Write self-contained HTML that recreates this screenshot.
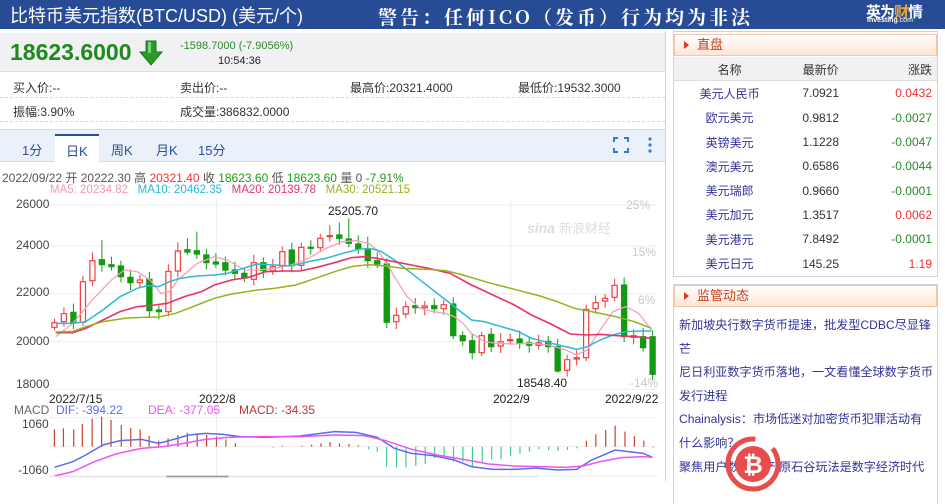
<!DOCTYPE html>
<html><head><meta charset="utf-8">
<style>
*{margin:0;padding:0;box-sizing:border-box}
body{width:945px;height:504px;overflow:hidden;background:#fff;font-family:"Liberation Sans","Noto Sans CJK SC",sans-serif;position:relative;color:#333}
.a{position:absolute;white-space:nowrap}
#hdr{left:0;top:0;width:945px;height:29px;background:#274b95}
#main{left:0;top:31px;width:666px;height:450px;border-right:1px solid #cfd3db}
.dash{border-bottom:1px dashed #d8d8d8}
.r{color:#e33}.g{color:#2a8a2a}
.rowt{font-size:12px;color:#333}
.ph{background:linear-gradient(#fff,#fde6d6);border:1px solid #f3c6a5;color:#c5431c;font-size:13px;padding-left:22px;line-height:20px}
.ph:before{content:"";position:absolute;left:9px;top:6px;border-left:5px solid #d4401a;border-top:4px solid transparent;border-bottom:4px solid transparent}
table{border-collapse:collapse;font-size:12px}
td{height:24.3px}
.nm{color:#333399;text-align:center;width:110px}
.pr{text-align:center;width:70px;color:#333}
.ch{text-align:right;width:80px;padding-right:5px}
.news{font-size:12.1px;color:#333399;line-height:23.6px;white-space:nowrap}
</style></head><body>
<div class="a" id="hdr"></div>
<div class="a" style="left:10px;top:2px;font-size:18px;color:#fff">比特币美元指数(BTC/USD) (美元/个)</div>
<div class="a" style="left:378px;top:3px;font-size:19px;color:#fff;font-family:'Noto Serif CJK SC',serif;letter-spacing:3px;font-weight:bold">警告：任何ICO（发币）行为均为非法</div>
<div class="a" style="left:866px;top:1px;font-size:15px;font-weight:bold;color:#fff;letter-spacing:-1px">英为<span style="color:#f5a623">财</span>情</div>
<div class="a" style="left:867px;top:17px;font-size:7px;font-weight:bold;color:#fff">Investing<span style="font-weight:normal">.com</span></div>

<div class="a" id="main"></div>
<div class="a" style="left:0;top:33px;width:665px;height:39px;background:#f1f1f3;border-bottom:1px solid #ddd"></div>
<div class="a" style="left:10px;top:39px;font-size:23px;font-weight:bold;color:#1e8a1e">18623.6000</div>
<svg class="a" style="left:138px;top:40px" width="26" height="26" viewBox="0 0 26 26"><path d="M8 1h10v11h6L13 25 2 12h6z" fill="#2a9a2a" stroke="#1a7a1a"/><path d="M10 2h3v11h-3z" fill="#7ccf7c"/></svg>
<div class="a g" style="left:180px;top:40px;font-size:11px">-1598.7000 (-7.9056%)</div>
<div class="a" style="left:218px;top:55px;font-size:11px;color:#222">10:54:36</div>
<div class="a dash" style="left:0;top:74px;width:665px;height:24px"></div>
<div class="a dash" style="left:0;top:98px;width:665px;height:24px"></div>
<div class="a rowt" style="left:13px;top:79px">买入价:--</div>
<div class="a rowt" style="left:180px;top:79px">卖出价:--</div>
<div class="a rowt" style="left:350px;top:79px">最高价:20321.4000</div>
<div class="a rowt" style="left:518px;top:79px">最低价:19532.3000</div>
<div class="a rowt" style="left:13px;top:103px">振幅:3.90%</div>
<div class="a rowt" style="left:180px;top:103px">成交量:386832.0000</div>

<div class="a" style="left:0;top:129px;width:665px;height:33px;background:#eaf1fb;border-top:1px solid #d3dcea;border-bottom:1px solid #d3dcea"></div>
<div class="a" style="left:55px;top:134px;width:44px;height:29px;background:#fff;border-top:2px solid #2b4e93"></div>
<div class="a" style="left:22px;top:140px;font-size:13px;color:#2b4e93">1分</div>
<div class="a" style="left:66px;top:141px;font-size:13px;color:#2b4e93">日K</div>
<div class="a" style="left:111px;top:140px;font-size:13px;color:#2b4e93">周K</div>
<div class="a" style="left:156px;top:140px;font-size:13px;color:#2b4e93">月K</div>
<div class="a" style="left:198px;top:140px;font-size:13px;color:#2b4e93">15分</div>
<svg class="a" style="left:613px;top:137px" width="16" height="16"><path d="M1 5V1h4M11 1h4v4M15 11v4h-4M5 15H1v-4" fill="none" stroke="#3a78d8" stroke-width="2"/></svg>
<svg class="a" style="left:647px;top:136px" width="6" height="18"><circle cx="3" cy="3" r="1.6" fill="#3a78d8"/><circle cx="3" cy="9" r="1.6" fill="#3a78d8"/><circle cx="3" cy="15" r="1.6" fill="#3a78d8"/></svg>

<div class="a" style="left:2px;top:169px;font-size:12px;color:#555">2022/09/22 开 20222.30 高 <span class="r">20321.40</span> 收 <span style="color:#1e9a1e">18623.60</span> 低 <span style="color:#1e9a1e">18623.60</span> 量 0 <span style="color:#1e9a1e">-7.91%</span></div>
<div class="a" style="left:50px;top:184px;font-size:11.5px"><span style="color:#f29ab8">MA5: 20234.82</span>&nbsp;&nbsp; <span style="color:#2ab6da">MA10: 20462.35</span>&nbsp;&nbsp; <span style="color:#e8336b">MA20: 20139.78</span>&nbsp;&nbsp; <span style="color:#96b21c">MA30: 20521.15</span></div>

<svg class="a" id="ch" style="left:0;top:190px" width="670" height="314" viewBox="0 0 1563 942" preserveAspectRatio="none"></svg>
<div class="a" style="left:16px;top:197px;font-size:12px;color:#444">26000</div>
<div class="a" style="left:16px;top:238px;font-size:12px;color:#444">24000</div>
<div class="a" style="left:16px;top:285px;font-size:12px;color:#444">22000</div>
<div class="a" style="left:16px;top:334px;font-size:12px;color:#444">20000</div>
<div class="a" style="left:16px;top:377px;font-size:12px;color:#444">18000</div>
<div class="a" style="left:626px;top:198px;font-size:12px;color:#c8c8c8">25%</div>
<div class="a" style="left:632px;top:245px;font-size:12px;color:#c8c8c8">15%</div>
<div class="a" style="left:638px;top:293px;font-size:12px;color:#c8c8c8">6%</div>
<div class="a" style="left:630px;top:376px;font-size:12px;color:#c8c8c8">-14%</div>
<div class="a" style="left:328px;top:204px;font-size:12px;color:#222">25205.70</div>
<div class="a" style="left:517px;top:376px;font-size:12px;color:#222">18548.40</div>
<div class="a" style="left:527px;top:218px;font-size:14px;color:#ddd;font-style:italic;font-weight:bold">sina <span style="font-weight:normal;font-style:normal;font-size:13px">新浪财经</span></div>
<div class="a" style="left:49px;top:392px;font-size:12px;color:#222">2022/7/15</div>
<div class="a" style="left:199px;top:392px;font-size:12px;color:#222">2022/8</div>
<div class="a" style="left:493px;top:392px;font-size:12px;color:#222">2022/9</div>
<div class="a" style="left:605px;top:392px;font-size:12px;color:#222">2022/9/22</div>
<div class="a" style="left:14px;top:403px;font-size:12px;color:#666">MACD &nbsp;<span style="color:#5a6cf0">DIF: -394.22</span></div>
<div class="a" style="left:148px;top:403px;font-size:12px;color:#ee55ee">DEA: -377.05</div>
<div class="a" style="left:239px;top:403px;font-size:12px;color:#b83a3a">MACD: -34.35</div>
<div class="a" style="left:22px;top:417px;font-size:12px;color:#444">1060</div>
<div class="a" style="left:18px;top:463px;font-size:12px;color:#444">-1060</div>

<!-- right panel -->
<div class="a" style="left:673px;top:31px;width:265px;height:246px;border:1px solid #cfd3db"></div>
<div class="a ph" style="left:674px;top:34px;width:263px;height:22px">直盘</div>
<div class="a" style="left:674px;top:57px;width:263px;height:24px;background:#f1f1f3;border-bottom:1px solid #ddd"></div>
<table class="a" style="left:674px;top:57px;width:263px">
<tr><td style="text-align:center;color:#333">名称</td><td class="pr">最新价</td><td class="ch" style="color:#333">涨跌</td></tr>
<tr><td class="nm">美元人民币</td><td class="pr">7.0921</td><td class="ch r">0.0432</td></tr>
<tr><td class="nm">欧元美元</td><td class="pr">0.9812</td><td class="ch g">-0.0027</td></tr>
<tr><td class="nm">英镑美元</td><td class="pr">1.1228</td><td class="ch g">-0.0047</td></tr>
<tr><td class="nm">澳元美元</td><td class="pr">0.6586</td><td class="ch g">-0.0044</td></tr>
<tr><td class="nm">美元瑞郎</td><td class="pr">0.9660</td><td class="ch g">-0.0001</td></tr>
<tr><td class="nm">美元加元</td><td class="pr">1.3517</td><td class="ch r">0.0062</td></tr>
<tr><td class="nm">美元港元</td><td class="pr">7.8492</td><td class="ch g">-0.0001</td></tr>
<tr><td class="nm">美元日元</td><td class="pr">145.25</td><td class="ch r">1.19</td></tr>
</table>
<div class="a" style="left:673px;top:284px;width:265px;height:220px;border:1px solid #cfd3db;border-bottom:none"></div>
<div class="a ph" style="left:674px;top:285px;width:263px;height:22px">监管动态</div>
<div class="a news" style="left:679px;top:314px;width:255px">新加坡央行数字货币提速，批发型CDBC尽显锋<br>芒<br>尼日利亚数字货币落地，一文看懂全球数字货币<br>发行进程<br>Chainalysis：市场低迷对加密货币犯罪活动有<br>什么影响？<br>聚焦用户数字资产 原石谷玩法是数字经济时代</div>
<svg class="a" style="left:725px;top:436px" width="56" height="56" viewBox="0 0 56 56"><circle cx="28" cy="28" r="25" fill="none" stroke="#e84d4d" stroke-width="5" stroke-dasharray="120 20"/><circle cx="28" cy="28" r="18" fill="#e84d4d"/><text x="28" y="37" text-anchor="middle" font-size="24" font-weight="bold" fill="#fff" font-family="Liberation Sans">₿</text></svg>

<script>
var s=document.getElementById('ch'),h='';
function L(x1,y1,x2,y2,c,w){h+='<line x1="'+x1+'" y1="'+y1+'" x2="'+x2+'" y2="'+y2+'" stroke="'+c+'" stroke-width="'+(w||1)+'" vector-effect="non-scaling-stroke"/>';}
[45,168,312,455,598].forEach(function(y){L(115,y,1535,y,'#eee')});
[683,770,858].forEach(function(y){L(115,y,1535,y,'#eee')});
L(505,30,505,860,'#eee');L(1192,30,1192,860,'#eee');
var c=[[398,412,1],[371,395,1],[367,397,0],[275,397,1],[212,272,1],[209,224,0],[224,230,0],[228,260,0],[262,278,0],[270,278,1],[268,362,0],[360,365,0],[244,365,1],[183,243,1],[179,186,0],[182,192,0],[195,218,0],[216,222,0],[218,240,0],[240,250,0],[250,264,0],[218,268,1],[218,242,0],[230,242,1],[185,228,1],[180,224,0],[172,226,1],[172,175,0],[145,173,1],[137,140,1],[135,145,0],[147,160,0],[162,176,0],[176,212,0],[212,222,0],[222,397,0],[376,395,1],[350,372,1],[347,353,0],[348,353,1],[347,356,0],[344,356,1],[342,437,0],[437,452,0],[452,488,0],[437,488,1],[433,470,0],[455,468,1],[449,452,1],[447,460,0],[458,466,0],[458,466,1],[454,470,0],[470,543,0],[509,541,1],[503,507,1],[358,503,1],[338,356,1],[325,333,1],[286,322,1],[285,440,0],[437,442,1],[440,473,0],[440,553,0]];
var wk={29:105,31:85,30:98,4:187,5:150,13:157,14:145,15:125,33:140,53:548,54:560,60:262,35:225};
c.forEach(function(d,i){var x=127+i*22.15,col=d[2]?'#f03c3c':'#139a13';var top=wk[i]&&wk[i]<d[0]?wk[i]:d[0]-12-(i*7%15),bot=wk[i]&&wk[i]>d[1]?wk[i]:d[1]+10+(i*5%14);
L(x,top,x,bot,col);var hh=Math.max(d[1]-d[0],3);
h+='<rect x="'+(x-6)+'" y="'+d[0]+'" width="12" height="'+hh+'" fill="'+(d[2]?'#fff':col)+'" stroke="'+col+'" stroke-width="1.2" vector-effect="non-scaling-stroke"/>';});
function P(p,col,w){h+='<polyline points="'+p+'" fill="none" stroke="'+col+'" stroke-width="'+w+'" vector-effect="non-scaling-stroke"/>';}
P("130,440 170,400 215,330 260,270 290,240 320,245 350,270 375,310 395,305 415,270 460,220 500,200 530,210 570,240 600,240 640,235 680,225 720,205 760,175 800,155 830,152 860,160 880,180 900,215 920,260 950,320 980,355 1010,365 1040,370 1060,380 1080,400 1100,430 1130,455 1160,460 1200,462 1240,460 1280,465 1320,480 1345,495 1370,480 1400,420 1430,365 1460,350 1490,370 1520,420",'#f4a0b8',1.3);
P("130,400 170,400 200,395 240,360 280,320 320,295 345,287 370,290 395,275 420,265 460,258 500,255 530,250 560,238 600,222 640,225 680,228 720,215 760,205 800,190 840,177 870,177 890,185 920,210 960,250 1000,290 1040,330 1070,360 1100,390 1130,395 1170,410 1210,425 1240,445 1280,458 1320,470 1345,478 1370,470 1400,450 1430,435 1460,425 1490,423 1520,423",'#2ab8dc',1.5);
P("130,428 170,428 200,415 240,390 280,365 320,350 360,345 390,340 430,320 470,305 500,285 540,270 580,262 620,245 660,243 700,243 740,232 780,218 820,203 850,200 880,205 920,215 960,225 1000,235 1050,250 1100,285 1150,315 1200,345 1240,375 1290,405 1330,432 1370,435 1400,433 1440,437 1480,440 1520,445",'#e8336b',1.6);
P("130,426 170,424 200,410 240,395 290,385 330,382 370,381 410,370 460,345 500,325 540,312 600,300 640,295 690,285 730,268 780,245 820,230 860,224 900,228 940,235 1000,238 1040,242 1080,255 1140,278 1200,298 1260,318 1300,335 1340,355 1380,365 1430,378 1480,395 1520,415",'#96b21c',1.5);
var m=[[127,718],[148,715],[172,718],[192,702],[215,686],[237,680],[259,690],[283,705],[305,714],[327,718],[348,738],[370,752],[392,745],[415,735],[437,728],[460,730],[482,735],[505,740],[527,748],[549,760],[637,773],[659,767],[705,767],[727,764],[749,760],[770,756],[792,760],[814,762],[836,766],[860,778],[880,785],[902,830],[925,832],[947,832],[970,828],[992,822],[1014,805],[1036,800],[1058,815],[1080,815],[1102,830],[1125,818],[1147,808],[1169,808],[1191,798],[1213,792],[1235,785],[1257,778],[1280,780],[1302,782],[1324,780],[1346,775],[1368,752],[1390,733],[1413,720],[1435,707],[1458,725],[1480,738],[1502,752],[1524,773]];
m.forEach(function(d){L(d[0],770,d[0],d[1],d[1]<770?'#c8442c':'#3ccc98',1.2)});
P("127,832 170,815 200,795 240,765 280,752 330,748 370,760 400,750 440,735 480,730 520,733 560,740 620,742 700,738 780,725 830,727 880,742 920,775 960,790 1010,797 1060,810 1100,830 1150,838 1200,838 1250,834 1300,840 1345,838 1380,810 1435,780 1480,787 1500,790 1522,802",'#5a6cf0',1.5);
P("127,858 170,845 220,815 270,792 330,775 380,770 420,762 480,748 530,742 600,740 700,740 780,735 850,737 900,752 960,778 1020,795 1080,808 1140,822 1200,828 1260,830 1320,832 1360,828 1400,815 1450,803 1500,800 1522,802",'#ee55ee',1.5);
h+='<rect x="115" y="858" width="1140" height="4" fill="#e6e6e6"/><rect x="388" y="857" width="145" height="5" fill="#999"/>';
s.innerHTML=h;
</script>
</body></html>
